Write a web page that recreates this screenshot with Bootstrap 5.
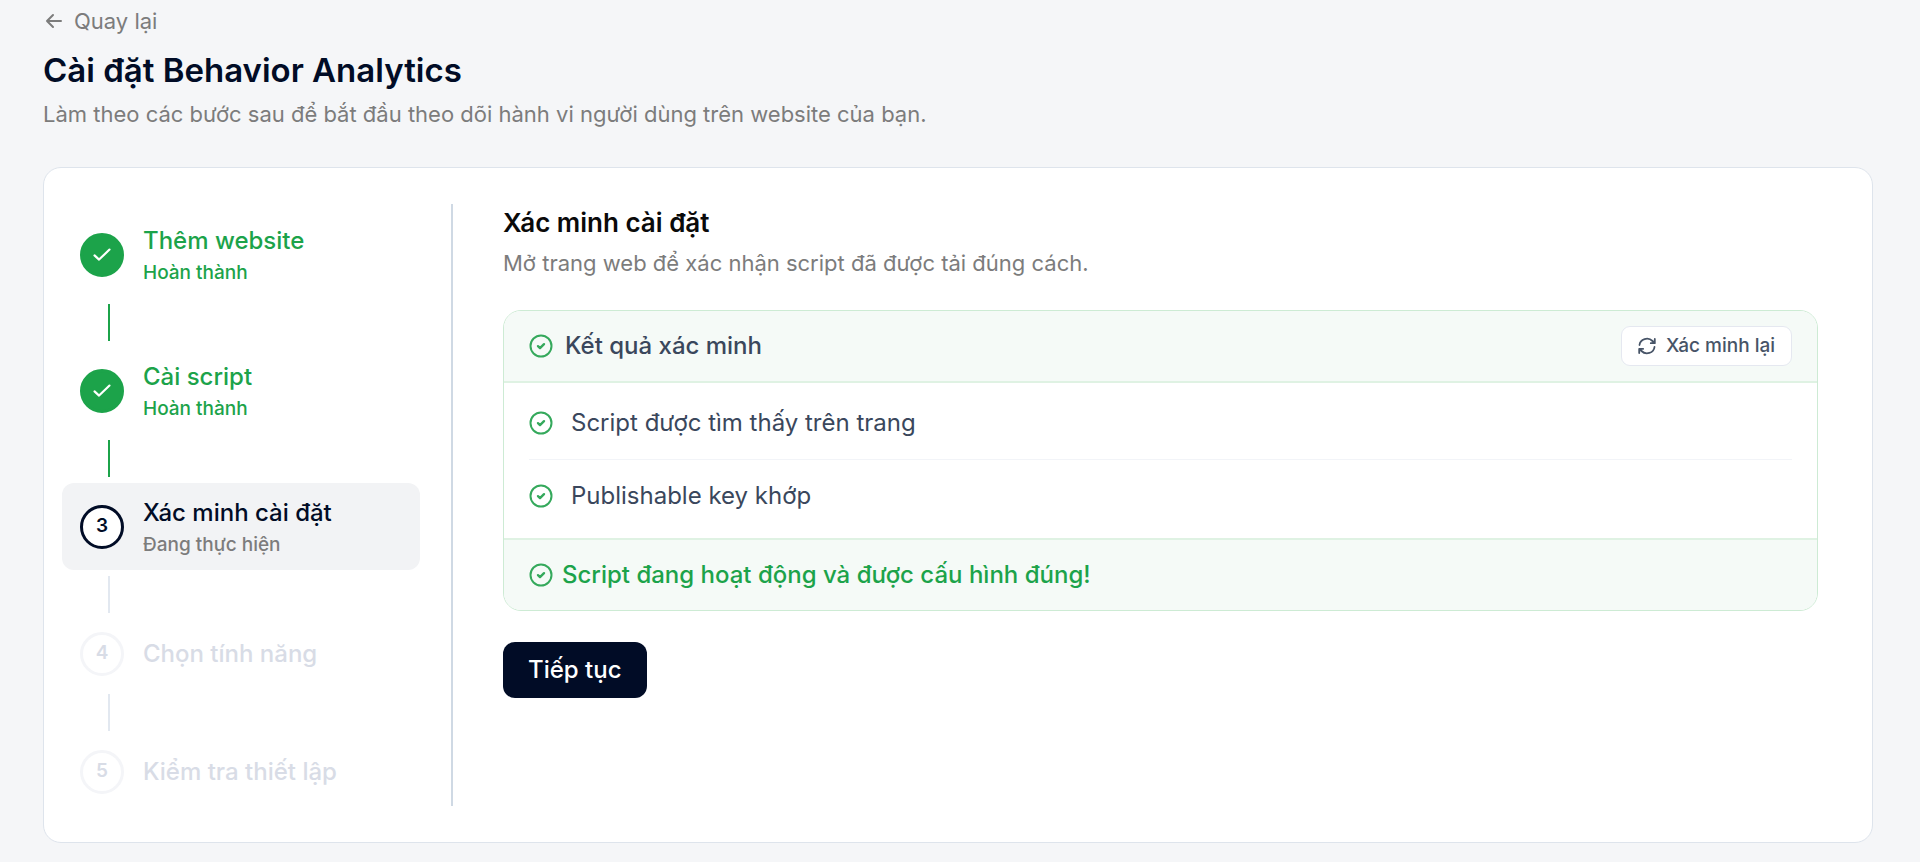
<!DOCTYPE html>
<html lang="vi">
<head>
<meta charset="utf-8">
<meta name="viewport" content="width=device-width, initial-scale=1">
<title>Cài đặt Behavior Analytics</title>
<link href="https://cdn.jsdelivr.net/npm/bootstrap@5.3.0/dist/css/bootstrap.min.css" rel="stylesheet">
<style>
  :root { --ink: #010c26; --slate: #3a475c; --muted: #7c7c7c; --green: #1ca34a; }
  body { font-family: Inter, "Noto Sans", sans-serif; background: #f5f6f8; color: var(--ink); }
  .page { padding: 6px 47px 18px 43px; }
  .back { color: var(--muted); font-size: 22px; line-height: 30px; gap: 12px; }
  .page-title { font-size: 33px; line-height: 44px; font-weight: 600; margin: 12px 0 5px; }
  .lead-line { font-size: 22px; line-height: 34px; color: var(--muted); }
  .setup { border: 1px solid #dee4ec; border-radius: 18px; padding: 36px 54px 36px 18px; margin-top: 36px; }
  .steps { width: 391px; padding: 7px 31px 0 0; border-right: 2px solid #cfd9e4; gap: 6px; }
  .step { height: 87px; border-radius: 12px; padding: 0 18px; gap: 19px; }
  .step.later { height: 69px; color: #d8dce6; }
  .step.current { background: #f2f3f5; }
  .step.done { color: var(--green); }
  .dot { width: 44px; height: 44px; font-size: 19px; font-weight: 600; background: #fff; border: 3px solid currentColor; }
  .done .dot { background: var(--green); }
  .later .dot { border-color: #f4f5f8; }
  .step-name { font-size: 24px; line-height: 32px; font-weight: 500; }
  .step-state { font-size: 19px; line-height: 32px; font-weight: 500; }
  .current .step-state { color: var(--muted); }
  .link-line { width: 2px; height: 37px; margin-left: 46px; background: #e2e8f0; }
  .link-line.done { background: var(--green); }
  .panel { padding-left: 50px; }
  .panel-title { font-size: 26px; line-height: 38px; font-weight: 600; color: #0a0a0a; }
  .panel .lead-line { margin-bottom: 30px; }
  .result { border: 1px solid #cdebd4; border-radius: 18px; color: var(--slate); font-size: 24px; margin-bottom: 31px; }
  .result-bar { background: #f5faf7; height: 72px; padding: 0 25px; font-weight: 500; }
  .result-head { border-bottom: 2px solid #dff2e3; }
  .result-foot { border-top: 2px solid #dff2e3; color: var(--green); gap: 9px; }
  .result-name { gap: 12px; }
  .mark-ok { color: #35a95c; }
  .checks { padding: 4px 25px 7px; }
  .checks li { height: 72px; gap: 18px; }
  .checks li + li { border-top: 1px solid #f2f4f8; }
  .btn-again { font-size: 19px; line-height: 28px; font-weight: 500; color: #475467; background: #fff; border: 1px solid #e5e8f0; border-radius: 9px; padding: 5px 16px; gap: 10px; }
  .btn-next { font-size: 24px; line-height: 34px; font-weight: 500; color: #fff; background: var(--ink); border-radius: 12px; padding: 10px 24px; }
  .btn-again:hover { background: #f8f9fb; }
  .btn-next:hover { background: #12203f; color: #fff; }
  svg { flex: none; fill: none; stroke: currentColor; stroke-linecap: round; stroke-linejoin: round; }
</style>
</head>
<body>
<svg width="0" height="0" class="position-absolute" aria-hidden="true">
  <symbol id="ok" viewBox="0 0 24 24"><circle cx="12" cy="12" r="10.500" stroke-width="2"/><path d="M9 12.200l2 1.900 4-3.900" stroke-width="2.400"/></symbol>
  <symbol id="tick" viewBox="0 0 24 24"><path d="M3 12.500l5.500 5L21 5.500" stroke-width="2.600"/></symbol>
</svg>
<main class="page">
  <a href="#" class="back d-inline-flex align-items-center text-decoration-none">
    <svg width="19" height="18" viewBox="0 0 19 18" stroke-width="2"><path d="M18 9H4M10 3L4 9l6 6"/></svg>Quay lại</a>
  <h1 class="page-title">Cài đặt Behavior Analytics</h1>
  <p class="lead-line mb-0">Làm theo các bước sau để bắt đầu theo dõi hành vi người dùng trên website của bạn.</p>

  <section class="setup bg-white d-flex">
    <nav class="steps d-flex flex-column flex-shrink-0" aria-label="Các bước">
      <div class="step done d-flex align-items-center">
        <span class="dot rounded-circle d-flex align-items-center justify-content-center"><svg class="text-white" width="20" height="20"><use href="#tick"/></svg></span>
        <div class="pt-1"><div class="step-name">Thêm website</div><div class="step-state">Hoàn thành</div></div>
      </div>
      <div class="link-line done"></div>
      <div class="step done d-flex align-items-center">
        <span class="dot rounded-circle d-flex align-items-center justify-content-center"><svg class="text-white" width="20" height="20"><use href="#tick"/></svg></span>
        <div class="pt-1"><div class="step-name">Cài script</div><div class="step-state">Hoàn thành</div></div>
      </div>
      <div class="link-line done"></div>
      <div class="step current d-flex align-items-center" aria-current="step">
        <span class="dot rounded-circle d-flex align-items-center justify-content-center">3</span>
        <div class="pt-1"><div class="step-name">Xác minh cài đặt</div><div class="step-state">Đang thực hiện</div></div>
      </div>
      <div class="link-line"></div>
      <div class="step later d-flex align-items-center">
        <span class="dot rounded-circle d-flex align-items-center justify-content-center">4</span>
        <div class="step-name">Chọn tính năng</div>
      </div>
      <div class="link-line"></div>
      <div class="step later d-flex align-items-center">
        <span class="dot rounded-circle d-flex align-items-center justify-content-center">5</span>
        <div class="step-name">Kiểm tra thiết lập</div>
      </div>
    </nav>

    <div class="panel flex-grow-1">
      <h2 class="panel-title mb-1">Xác minh cài đặt</h2>
      <p class="lead-line">Mở trang web để xác nhận script đã được tải đúng cách.</p>
      <div class="result overflow-hidden">
        <div class="result-bar result-head d-flex align-items-center justify-content-between">
          <div class="result-name d-flex align-items-center"><svg class="mark-ok" width="24" height="24"><use href="#ok"/></svg>Kết quả xác minh</div>
          <button type="button" class="btn btn-again d-flex align-items-center">
            <svg width="18" height="18" viewBox="0 0 18 18" stroke-width="1.800"><path d="M1.500 8A7.500 7 0 0 1 14.500 4L16.500 6M16.800 2v4.200h-4M16.500 10A7.500 7 0 0 1 3.500 14L1.500 12M1.200 16v-4.200h4"/></svg>Xác minh lại</button>
        </div>
        <ul class="checks list-unstyled mb-0">
          <li class="d-flex align-items-center"><svg class="mark-ok" width="24" height="24"><use href="#ok"/></svg>Script được tìm thấy trên trang</li>
          <li class="d-flex align-items-center"><svg class="mark-ok" width="24" height="24"><use href="#ok"/></svg>Publishable key khớp</li>
        </ul>
        <div class="result-bar result-foot d-flex align-items-center"><svg class="mark-ok" width="24" height="24"><use href="#ok"/></svg>Script đang hoạt động và được cấu hình đúng!</div>
      </div>
      <button type="button" class="btn btn-next">Tiếp tục</button>
    </div>
  </section>
</main>
<script src="https://cdn.jsdelivr.net/npm/bootstrap@5.3.0/dist/js/bootstrap.bundle.min.js"></script>
</body>
</html>
